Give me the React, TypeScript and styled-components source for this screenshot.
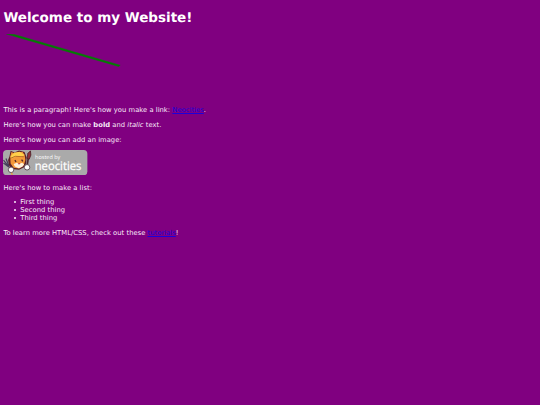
import React, { FC } from 'react'
import styled, { createGlobalStyle } from 'styled-components'

const GlobalStyle = createGlobalStyle`
  body {
    margin: 0;
    background: #800080;
    color: #f8eaf8;
    font-family: Verdana, 'DejaVu Sans', sans-serif;
    font-size: 6.75px;
    line-height: 8px;
    letter-spacing: 0.036px;
    text-rendering: geometricPrecision;
  }
`

const Page = styled.main`
  padding: 10px 3.375px;
`

const Title = styled.h1`
  margin: 0 0 8px;
  color: #fff;
  font-size: 13.5px;
  line-height: 16px;
  letter-spacing: 0;
`

const Drawing = styled.svg`
  display: block;
  width: 126.5px;
  height: 63.3px;
  margin-bottom: 9.1px;
`

const Paragraph = styled.p`
  margin: 0 0 6.75px;
`

const Link = styled.a`
  color: #1c00dc;
  text-decoration: underline;
  text-decoration-thickness: 0.6px;
`

const Badge = styled.svg`
  display: block;
  width: 84.4px;
  height: 25.3px;
  margin: -0.6px 0 8.2px;
`

const List = styled.ul`
  margin: 0 0 6.65px;
  padding-left: 16.875px;
  list-style: none;
`

const Item = styled.li`
  &::before {
    content: '';
    display: inline-block;
    width: 2.4px;
    height: 2.4px;
    margin: 0 4px 1.2px -6.4px;
    border-radius: 50%;
    background: currentColor;
  }
`

const HostedBy: FC = () => (
  <Badge viewBox="0 0 200 60" role="img" aria-label="Hosted by Neocities">
    <rect width="200" height="60" rx="9" fill="#aaa" />
    {/* fork */}
    <path d="M1 24l17 21M7 20l7 18M1 31l12 9" stroke="#46405c" strokeWidth="3" />
    {/* cat */}
    <path d="M15 16l3-14 9 4 11-5 13 4 5 13-1 14-5 9-12 6-17-2-7-9-2-12z" fill="#5b2028" />
    <path d="M17 16l3-11 8 4 18-5 5 7 2 13-4 13-10 7-14-2-7-10z" fill="#f3983a" />
    <path d="M18 15l9-9 13-2 11 8-7 5-13-1-12 5z" fill="#ffd04a" />
    <path d="M17 20l12-5 20 1" stroke="#a85a20" strokeWidth="2" fill="none" />
    <path d="M25 33l8-3 5 3 7-3 5 4-4 6-9 3-9-4z" fill="#fff0da" />
    <path d="M28 24l3 4M44 23l3 4" stroke="#4b2028" strokeWidth="3" />
    <path d="M35 32l6-1-3 4z" fill="#b53045" />
    {/* brush */}
    <path d="M57 38l3-20" stroke="#4a2630" strokeWidth="4" />
    <path d="M57 20l2-12 6-6 1 10-4 10z" fill="#92303a" stroke="#4b2028" strokeWidth="2" />
    <circle cx="19" cy="47" r="6.5" fill="#fff" stroke="#54404b" strokeWidth="2" />
    <circle cx="57" cy="41" r="6.5" fill="#fff" stroke="#54404b" strokeWidth="2" />
    <path d="M20 54l2 5" stroke="#e99b3d" strokeWidth="3" />
    <g fill="#fff" fontFamily="'Open Sans', 'Noto Sans', sans-serif">
      <text x="76" y="22" fontSize="13" textLength="60" lengthAdjust="spacingAndGlyphs">
        hosted by
      </text>
      <text
        x="75"
        y="48"
        fontSize="28"
        stroke="#fff"
        strokeWidth="0.6"
        textLength="111"
        lengthAdjust="spacingAndGlyphs"
      >
        neocities
      </text>
    </g>
  </Badge>
)

const App: FC = () => {
  return (
    <>
      <GlobalStyle />
      <Page>
        <Title>Welcome to my Website!</Title>
        <Drawing viewBox="0 0 300 150">
          <polygon points="8,0 27,1 278,74 274,77" fill="green" stroke="green" strokeWidth="1" />
        </Drawing>
        <Paragraph>
          This is a paragraph! Here's how you make a link: <Link href="#">Neocities</Link>.
        </Paragraph>
        <Paragraph>
          Here's how you can make <strong>bold</strong> and <em>italic</em> text.
        </Paragraph>
        <Paragraph>Here's how you can add an image:</Paragraph>
        <HostedBy />
        <Paragraph>Here's how to make a list:</Paragraph>
        <List>
          <Item>First thing</Item>
          <Item>Second thing</Item>
          <Item>Third thing</Item>
        </List>
        <Paragraph>
          To learn more HTML/CSS, check out these <Link href="#">tutorials</Link>!
        </Paragraph>
      </Page>
    </>
  )
}

export default App
